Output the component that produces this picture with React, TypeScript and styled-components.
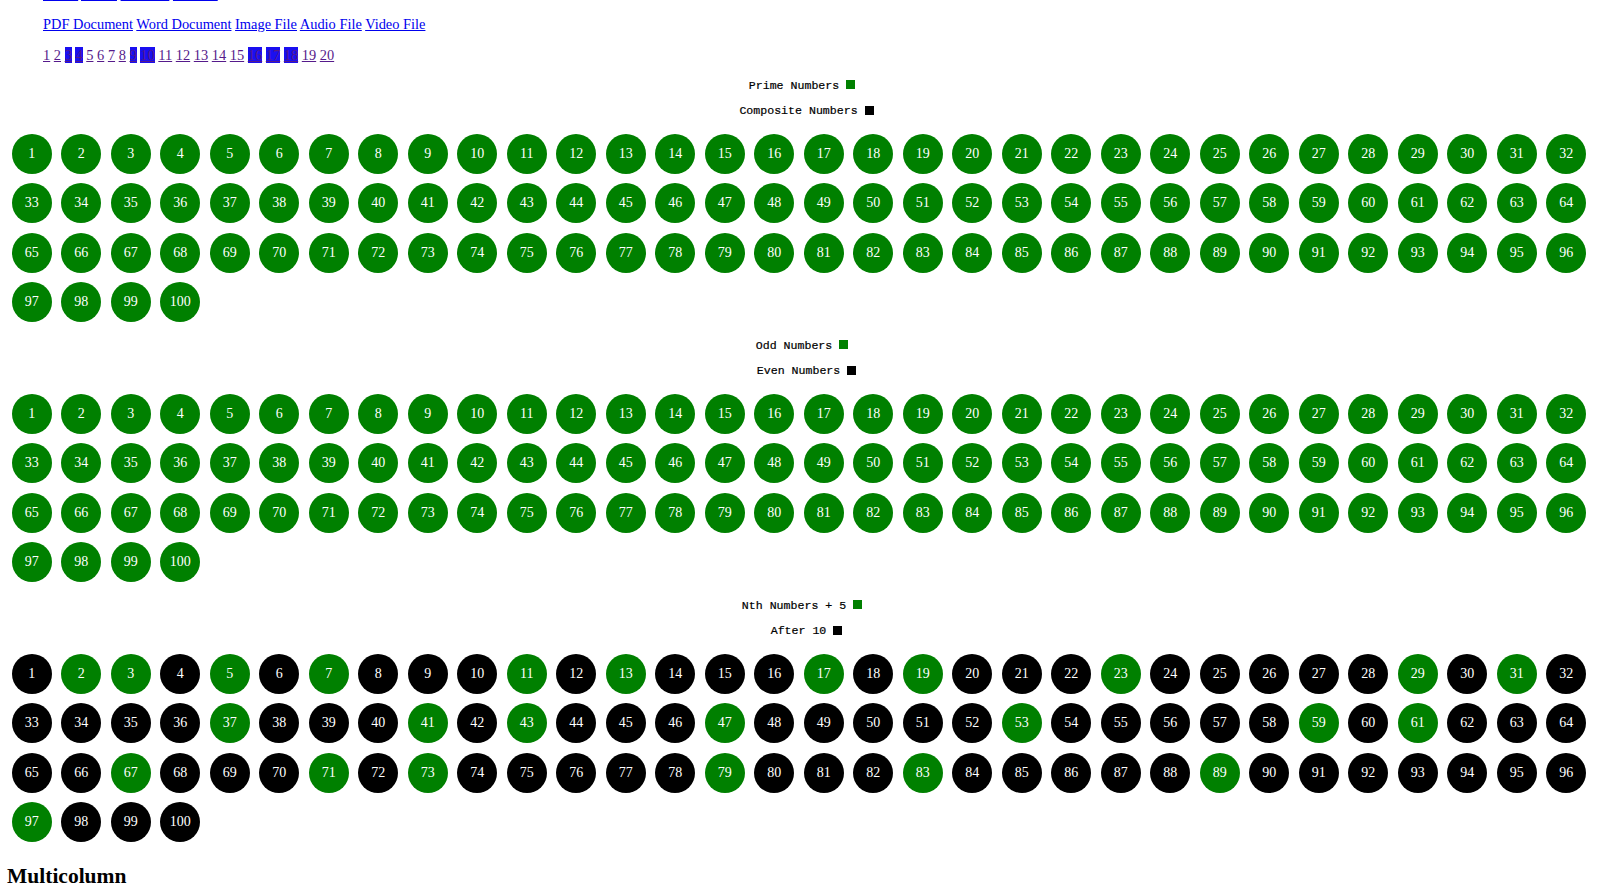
import React from "react";
import styled, { createGlobalStyle } from "styled-components";

const GlobalStyle = createGlobalStyle`
  html, body {
    margin: 0;
    padding: 0;
    background: #ffffff;
    overflow: hidden;
  }
  body {
    font-family: "Liberation Serif", "Times New Roman", serif;
    color: #000000;
  }
`;

const primes = new Set([
  2, 3, 5, 7, 11, 13, 17, 19, 23, 29, 31, 37, 41, 43, 47, 53, 59, 61, 67, 71, 73, 79, 83, 89, 97,
]);

const numbers = Array.from({ length: 100 }, (_, i) => i + 1);
const pages = Array.from({ length: 20 }, (_, i) => i + 1);
const activePages = new Set([3, 4, 9, 10, 16, 17, 18]);

const topLinks = ["Home", "About", "Services", "Contact"];
const fileLinks = ["PDF Document", "Word Document", "Image File", "Audio File", "Video File"];

type SectionProps = {
  first?: boolean;
  labelA: string;
  labelB: string;
  colorOf: (n: number) => string;
};

const NumberSection = ({ first, labelA, labelB, colorOf }: SectionProps) => (
  <Section $first={first}>
    <Legend>
      <LegendItem $trail>
        {labelA} <Swatch $color="#008000" />
      </LegendItem>
      <LegendItem>
        {labelB} <Swatch $color="#000000" />
      </LegendItem>
    </Legend>
    <Grid>
      {numbers.map((n) => (
        <Ball key={n} $color={colorOf(n)}>
          {n}
        </Ball>
      ))}
    </Grid>
  </Section>
);

const App = () => {
  return (
    <Page>
      <GlobalStyle />
      <Nav>
        <NavRow>
          {topLinks.map((l) => (
            <React.Fragment key={l}>
              <FileLink href="#">{l}</FileLink>{" "}
            </React.Fragment>
          ))}
        </NavRow>
        <NavRow>
          {fileLinks.map((l) => (
            <React.Fragment key={l}>
              <FileLink href="#">{l}</FileLink>{" "}
            </React.Fragment>
          ))}
        </NavRow>
        <NavRow>
          {pages.map((p) => (
            <React.Fragment key={p}>
              <PageLink href="#" $active={activePages.has(p)}>
                {p}
              </PageLink>{" "}
            </React.Fragment>
          ))}
        </NavRow>
      </Nav>

      <NumberSection first labelA="Prime Numbers" labelB="Composite Numbers" colorOf={() => "#008000"} />
      <NumberSection labelA="Odd Numbers" labelB="Even Numbers" colorOf={() => "#008000"} />
      <NumberSection
        labelA="Nth Numbers + 5"
        labelB="After 10"
        colorOf={(n) => (primes.has(n) ? "#008000" : "#000000")}
      />

      <Heading>Multicolumn</Heading>
    </Page>
  );
};

const Page = styled.div`
  padding: 0 8px;
`;

const Nav = styled.nav`
  margin-top: -21.5px;
  padding-left: 35px;
  font-size: 14.4px;
`;

const NavRow = styled.div`
  line-height: 30.8px;
  white-space: nowrap;
`;

const FileLink = styled.a`
  color: #0000ee;
  text-decoration: underline;
`;

const PageLink = styled.a<{ $active?: boolean }>`
  color: #551a8b;
  text-decoration: underline;
  background: ${(p) => (p.$active ? "#1a0ff0" : "transparent")};
`;

const Section = styled.section<{ $first?: boolean }>`
  padding-top: ${(p) => (p.$first ? "1.65px" : "5.75px")};
`;

const Legend = styled.div`
  display: flex;
  flex-direction: column;
  align-items: center;
  margin-bottom: 4.85px;
`;

const LegendItem = styled.div<{ $trail?: boolean }>`
  font-family: "Liberation Mono", "Courier New", monospace;
  font-size: 11.6px;
  line-height: 25.7px;
  color: #000000;
  white-space: pre;
  padding-right: ${(p) => (p.$trail ? "9px" : "0")};
  -webkit-text-stroke: 0.2px #000000;
`;

const Swatch = styled.span<{ $color: string }>`
  display: inline-block;
  width: 9px;
  height: 9px;
  background: ${(p) => p.$color};
  vertical-align: -0.5px;
`;

const Grid = styled.div`
  display: flex;
  flex-wrap: wrap;
  margin-left: -1px;
`;

const Ball = styled.div<{ $color: string }>`
  width: 40px;
  height: 40px;
  margin: 4.75px;
  border-radius: 50%;
  background: ${(p) => p.$color};
  color: #ffffff;
  display: flex;
  align-items: center;
  justify-content: center;
  font-family: "Liberation Serif", "Times New Roman", serif;
  font-size: 14px;
`;

const Heading = styled.h2`
  margin: 17.6px 0 0 -1px;
  font-size: 21.5px;
  font-weight: bold;
  font-family: "Liberation Serif", "Times New Roman", serif;
`;

export default App;
